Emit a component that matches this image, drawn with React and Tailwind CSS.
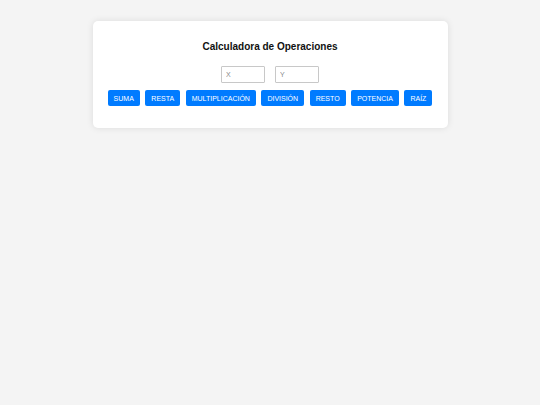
import React from "react";

const ops = ["SUMA", "RESTA", "MULTIPLICACIÓN", "DIVISIÓN", "RESTO", "POTENCIA", "RAÍZ"];

export default function App() {
  return (
    <div
      className="min-h-[405px] w-full bg-[#f4f4f4] pt-[21px]"
      style={{ fontFamily: '"Liberation Sans", Arial, sans-serif' }}
    >
      <div className="mx-auto w-[355px] rounded-[5px] bg-white pt-[20px] pb-[22px] shadow-[0_0_7px_rgba(0,0,0,0.1)]">
        <h2 className="text-center text-[10px] font-bold leading-[12px] text-[#111]">
          Calculadora de Operaciones
        </h2>
        <div className="mt-[13px] flex justify-center gap-[10px]">
          <input
            placeholder="X"
            className="h-[17px] w-[44px] rounded-[1px] border border-[#c8c8c8] px-[4px] text-[7px] leading-none outline-none placeholder:text-[#8a8a8a]"
          />
          <input
            placeholder="Y"
            className="h-[17px] w-[44px] rounded-[1px] border border-[#c8c8c8] px-[4px] text-[7px] leading-none outline-none placeholder:text-[#8a8a8a]"
          />
        </div>
        <div className="mt-[7px] flex justify-center gap-[5.5px]">
          {ops.map((op) => (
            <button
              key={op}
              className="h-[16px] rounded-[2px] bg-[#007bff] px-[6px] text-[7px] leading-none text-white"
            >
              {op}
            </button>
          ))}
        </div>
      </div>
    </div>
  );
}
